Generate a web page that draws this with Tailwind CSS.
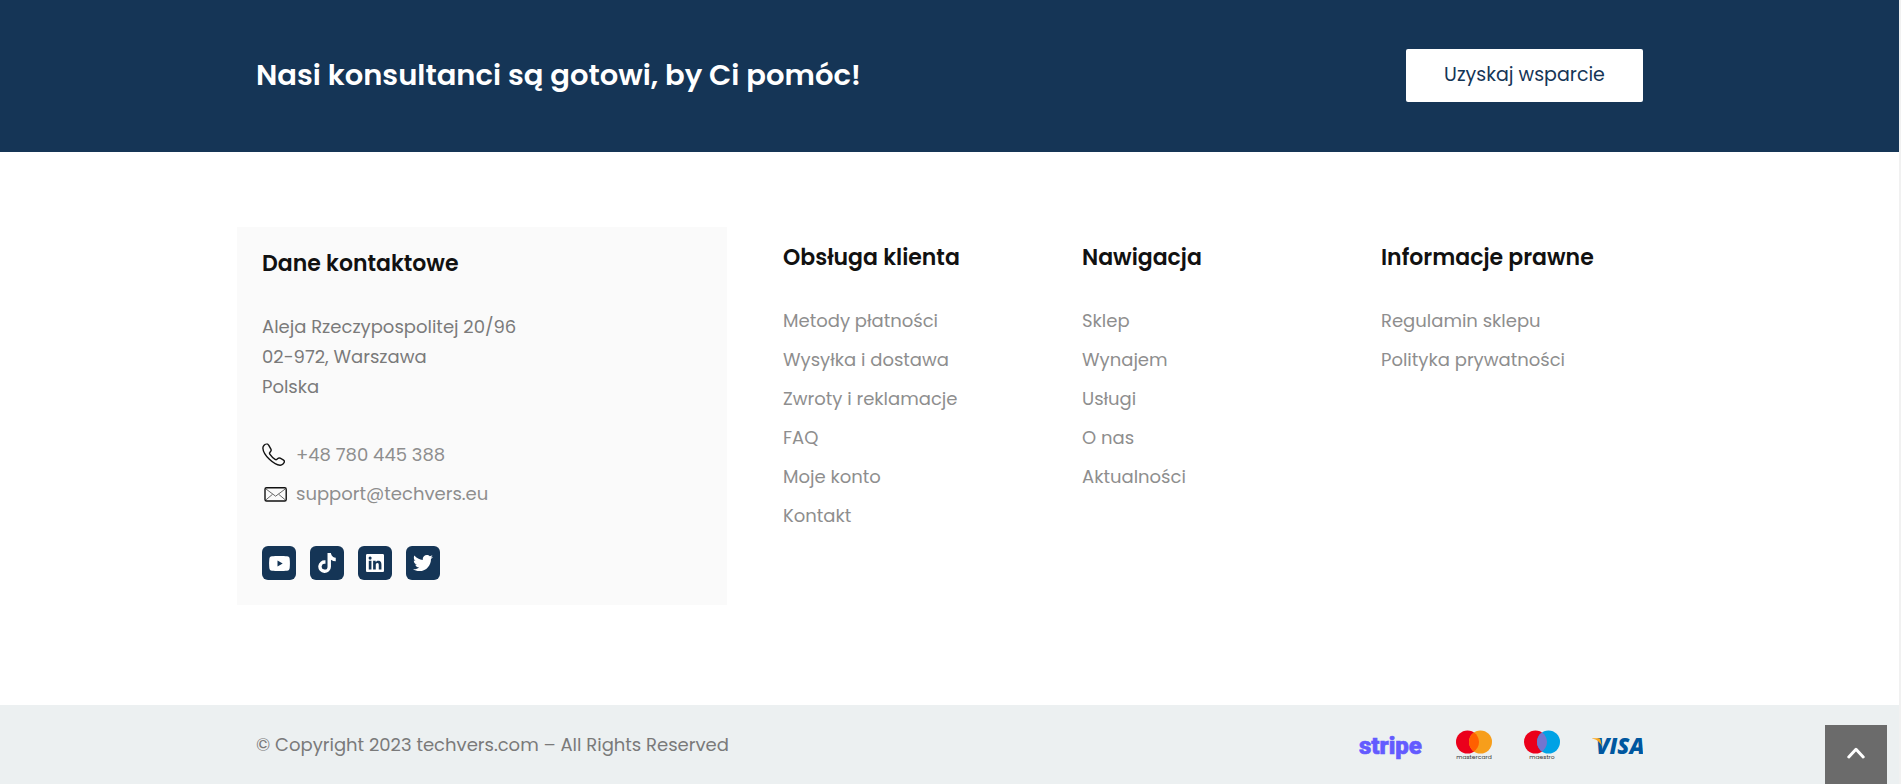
<!DOCTYPE html>
<html lang="pl">
<head>
<meta charset="utf-8">
<meta name="viewport" content="width=device-width, initial-scale=1">
<title>Techvers</title>
<script src="https://cdn.jsdelivr.net/npm/@tailwindcss/browser@4"></script>
</head>
<body class="border-r-2 border-[#f1f1f1] bg-white font-['Poppins','Inter',sans-serif] text-[18px] text-[#7a7a7a]">

<section class="bg-[#153556] px-6 pt-[49px] pb-[50px]">
  <div class="mx-auto flex max-w-[1387px] flex-wrap items-center justify-between gap-4">
    <h2 class="text-[29px] leading-[53px] font-semibold text-white">Nasi konsultanci są gotowi, by Ci pomóc!</h2>
    <button type="button" class="h-[53px] w-[237px] rounded-[2px] bg-white text-[19px] text-[#153556]">Uzyskaj wsparcie</button>
  </div>
</section>

<main class="px-6 pt-[75px] pb-[100px]">
  <div class="mx-auto grid max-w-[1425px] gap-14 lg:grid-cols-[490px_1fr]">
    <section class="bg-[#fafafa] px-[25px] pt-[19px] pb-[25px]">
      <h3 class="text-[22px] leading-9 font-semibold text-[#111]">Dane kontaktowe</h3>
      <address class="mt-[30px] text-[18px] leading-[30px] not-italic">Aleja Rzeczypospolitej 20/96<br>02-972, Warszawa<br>Polska</address>
      <ul class="mt-[33px] text-[18px] leading-[39px] text-[#8e8e8e]">
        <li><a href="tel:+48780445388" class="flex items-center gap-[11px]">
          <svg class="size-[23px]" viewBox="0 0 23 23" fill="none" stroke="#111" stroke-width="1.4" stroke-linejoin="round" aria-hidden="true"><path d="M4.6.9C3 1 .8 3 .9 5.200c.2 3.400 3 7.700 6.500 11.100 3.700 3.500 7.700 6 10.800 5.900 2-.1 4.100-2.100 4.200-3.600.1-.8-.4-1.300-1.200-1.800l-3-1.600c-1-.5-1.700-.3-2.400.3l-1.100 1c-.5.4-1 .3-1.600-.1-1.900-1.300-4-3.400-5.300-5.300-.4-.6-.4-1.100 0-1.600L8.700 8.300c.6-.7.6-1.400.2-2.200L6.800 2.400C6.200 1.400 5.500.8 4.600.9Z"/></svg>
          <span>+48 780 445 388</span></a></li>
        <li><a href="mailto:support@techvers.eu" class="flex items-center gap-[9px]">
          <svg class="h-4 w-[25px]" viewBox="0 0 25 16" fill="none" aria-hidden="true"><rect x="3" y="1.700" width="21.200" height="13.300" rx="1.500" stroke="#111" stroke-width="1.400"/><path d="m4 3 9.600 7.200L23.200 3M4 13.800l6.500-5.500M23.200 13.800l-6.500-5.500" stroke="#444" stroke-width=".8"/></svg>
          <span>support@techvers.eu</span></a></li>
      </ul>
      <div class="mt-[33px] flex gap-[14px]">
        <a href="#youtube" aria-label="YouTube" class="flex size-[34px] items-center justify-center rounded-md bg-[#153556]">
          <svg class="h-[15px] w-[21px]" viewBox="0 0 21 15" aria-hidden="true"><path fill="#fff" d="M3 .3C6 0 15 0 18 .3c1.700.2 2.500 1 2.700 2.700.3 3 .3 6 0 9-.2 1.700-1 2.500-2.700 2.700-3 .3-12 .3-15 0C1.300 14.500.5 13.700.3 12 0 9 0 6 .3 3 .5 1.300 1.300.5 3 .3Z"/><path fill="#153556" d="m8.500 4.400 5.200 3.100-5.200 3.100Z"/></svg></a>
        <a href="#tiktok" aria-label="TikTok" class="flex size-[34px] items-center justify-center rounded-md bg-[#153556]">
          <svg class="h-5 w-[18px]" viewBox="0 0 448 512" aria-hidden="true"><path fill="#fff" d="M448 209.900a210.100 210.100 0 0 1-122.800-39.300v178.800A162.600 162.600 0 1 1 185 188.300v89.900a74.600 74.600 0 1 0 52.200 71.200V0h88a121.200 121.200 0 0 0 1.900 22.200 122.200 122.200 0 0 0 53.900 80.200 121.400 121.400 0 0 0 67 20.100Z"/></svg></a>
        <a href="#linkedin" aria-label="LinkedIn" class="flex size-[34px] items-center justify-center rounded-md bg-[#153556]">
          <svg class="size-[18px]" viewBox="0 0 448 448" aria-hidden="true"><path fill="#fff" d="M416 0H31.900C14.300 0 0 14.500 0 32.300v383.400C0 433.500 14.300 448 31.900 448H416c17.600 0 32-14.500 32-32.300V32.300C448 14.500 433.600 0 416 0ZM135.400 384H69V170.200h66.500V384Zm-33.200-243a38.500 38.500 0 1 1 0-77 38.500 38.500 0 0 1 0 77Zm282.100 243h-66.400V280c0-24.800-.5-56.700-34.500-56.700-34.600 0-39.900 27-39.900 54.900V384h-66.400V170.200h63.700v29.200h.9c8.900-16.800 30.600-34.500 62.900-34.500 67.200 0 79.700 44.300 79.700 101.900Z"/></svg></a>
        <a href="#twitter" aria-label="Twitter" class="flex size-[34px] items-center justify-center rounded-md bg-[#153556]">
          <svg class="size-5" viewBox="0 0 512 512" aria-hidden="true"><path fill="#fff" d="M459.400 151.700c.3 4.500.3 9.100.3 13.600 0 138.700-105.600 298.600-298.600 298.600-59.500 0-114.700-17.200-161.100-47.100 8.400 1 16.600 1.300 25.300 1.300 49.100 0 94.200-16.600 130.300-44.800-46.100-1-84.800-31.200-98.100-72.800 6.500 1 13 1.600 19.800 1.600 9.400 0 18.800-1.300 27.600-3.600-48.100-9.700-84.100-52-84.100-103v-1.300c14 7.800 30.200 12.700 47.400 13.300-28.300-18.800-46.800-51-46.800-87.400 0-19.500 5.200-37.400 14.300-53 51.700 63.700 129.300 105.300 216.400 109.800-1.600-7.800-2.600-15.900-2.600-24 0-57.800 46.800-104.900 104.900-104.900 30.200 0 57.500 12.700 76.700 33.100 23.700-4.500 46.500-13.300 66.600-25.300-7.800 24.400-24.400 44.800-46.100 57.800 21.100-2.300 41.600-8.100 60.400-16.200-14.300 20.800-32.200 39.300-52.600 54.300Z"/></svg></a>
      </div>
    </section>

    <div class="grid gap-[18px] pt-[13px] text-[#8e8e8e] sm:grid-cols-3">
      <nav aria-labelledby="obsluga">
        <h3 id="obsluga" class="text-[22px] leading-9 font-semibold text-[#111]">Obsługa klienta</h3>
        <ul class="mt-[25px] text-[18px] leading-[39px]">
          <li><a href="#platnosci">Metody płatności</a></li>
          <li><a href="#dostawa">Wysyłka i dostawa</a></li>
          <li><a href="#zwroty">Zwroty i reklamacje</a></li>
          <li><a href="#faq">FAQ</a></li>
          <li><a href="#konto">Moje konto</a></li>
          <li><a href="#kontakt">Kontakt</a></li>
        </ul>
      </nav>
      <nav aria-labelledby="nawigacja">
        <h3 id="nawigacja" class="text-[22px] leading-9 font-semibold text-[#111]">Nawigacja</h3>
        <ul class="mt-[25px] text-[18px] leading-[39px]">
          <li><a href="#sklep">Sklep</a></li>
          <li><a href="#wynajem">Wynajem</a></li>
          <li><a href="#uslugi">Usługi</a></li>
          <li><a href="#o-nas">O nas</a></li>
          <li><a href="#aktualnosci">Aktualności</a></li>
        </ul>
      </nav>
      <nav aria-labelledby="prawne">
        <h3 id="prawne" class="text-[22px] leading-9 font-semibold text-[#111]">Informacje prawne</h3>
        <ul class="mt-[25px] text-[18px] leading-[39px]">
          <li><a href="#regulamin">Regulamin sklepu</a></li>
          <li><a href="#prywatnosc">Polityka prywatności</a></li>
        </ul>
      </nav>
    </div>
  </div>
</main>

<footer class="bg-[#ecf0f1] px-6 py-6">
  <div class="mx-auto flex max-w-[1387px] flex-wrap items-center justify-between gap-x-8">
    <p class="text-[18px] leading-[31px]">© Copyright 2023 techvers.com – All Rights Reserved</p>
    <div class="flex items-center gap-8">
      <svg class="h-[31px] w-[65px]" viewBox="0 0 65 31" role="img" aria-label="stripe"><text x="0" y="25" fill="#635bff" stroke="#635bff" stroke-width=".6" font-family="Roboto" font-weight="900" font-size="24">stripe</text></svg>
      <svg class="h-[31px] w-9" viewBox="0 0 36 31" role="img" aria-label="mastercard"><circle cx="11.500" cy="13" r="11.500" fill="#eb001b"/><circle cx="24.500" cy="13" r="11.500" fill="#f79e1b"/><path d="M18 3.500a11.500 11.500 0 0 1 0 19 11.500 11.500 0 0 1 0-19Z" fill="#ff5f00"/><text x="18" y="30" text-anchor="middle" fill="#333" font-family="Poppins" font-size="6">mastercard</text></svg>
      <svg class="h-[31px] w-9" viewBox="0 0 36 31" role="img" aria-label="maestro"><circle cx="11.500" cy="13" r="11.500" fill="#eb001b"/><circle cx="24.500" cy="13" r="11.500" fill="#00a2e5"/><path d="M18 3.500a11.500 11.500 0 0 1 0 19 11.500 11.500 0 0 1 0-19Z" fill="#7375cf"/><text x="18" y="30" text-anchor="middle" fill="#333" font-family="Poppins" font-size="6">maestro</text></svg>
      <svg class="h-[31px] w-[51px]" viewBox="0 0 51 31" role="img" aria-label="VISA"><text x="4" y="25" fill="#00579f" font-family="Open Sans" font-style="italic" font-weight="800" font-size="22">VISA</text><path d="M0 9.200h6.500c1 0 1.700.5 2 1.500l1.500 6.800C8.300 13.500 5 10.500 0 9.600Z" fill="#faa61a"/></svg>
    </div>
  </div>
</footer>

<button type="button" aria-label="Do góry" class="fixed right-[14px] bottom-0 flex h-[59px] w-[62px] items-center justify-center bg-[#6b6b6b] pb-[3px]">
  <svg class="h-3 w-[18px]" viewBox="0 0 18 12" fill="none" stroke="#fff" stroke-width="3" stroke-linecap="round" stroke-linejoin="round" aria-hidden="true"><path d="m1.800 10 7.200-7.700 7.200 7.700"/></svg>
</button>
</body>
</html>
